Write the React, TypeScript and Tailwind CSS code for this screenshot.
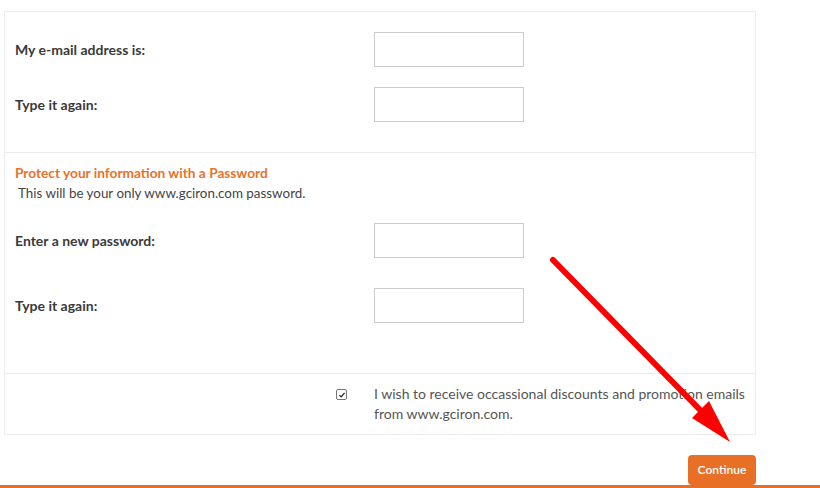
import React from "react";

const font = { fontFamily: "Lato, 'Open Sans', sans-serif" };

function Field({ label }: { label: string }) {
  return (
    <div className="flex items-center">
      <div className="w-[369px] pl-[10px] text-[14px] font-bold text-[#3a3a3a]">{label}</div>
      <input className="h-[35px] w-[150px] border border-[#cccccc] bg-white outline-none" />
    </div>
  );
}

export default function App() {
  return (
    <div className="relative h-[488px] w-[820px] overflow-hidden bg-white" style={font}>
      <div className="ml-[4px] mt-[11px] w-[752px] border border-[#ececec]">
        <div className="flex flex-col gap-[20px] border-b border-[#ececec] pb-[30px] pt-[20px]">
          <Field label="My e-mail address is:" />
          <Field label="Type it again:" />
        </div>
        <div className="border-b border-[#ececec] pb-[50px] pt-[10px]">
          <div className="pl-[10px] text-[13.7px] font-bold leading-[20px] text-[#e8722a]">
            Protect your information with a Password
          </div>
          <div className="pl-[10px] text-[13.4px] leading-[20px] text-[#444]">&nbsp;This will be your only www.gciron.com password.</div>
          <div className="mt-[20px] flex flex-col gap-[30px]">
            <Field label="Enter a new password:" />
            <Field label="Type it again:" />
          </div>
        </div>
        <div className="flex items-start py-[10px]">
          <div className="flex w-[369px] justify-end pr-[27px] pt-[5px]">
            <span className="flex h-[11px] w-[11px] items-center justify-center rounded-[2px] border border-[#777] bg-white">
              <svg viewBox="0 0 10 10" className="h-[8px] w-[8px]">
                <path d="M1.8 5.2 L4 7.4 L8.2 2.4" fill="none" stroke="#222" strokeWidth="1.6" />
              </svg>
            </span>
          </div>
          <div className="w-[378px] text-[14px] leading-[20px] text-[#555]">
            I wish to receive occassional discounts and promotion emails from www.gciron.com.
          </div>
        </div>
      </div>
      <div className="flex w-[756px] justify-end pt-[20px]">
        <button className="h-[30px] w-[68px] rounded-[4px] bg-[#e87026] text-[12px] font-semibold text-white">
          Continue
        </button>
      </div>
      <div className="absolute bottom-0 left-0 h-[3px] w-full bg-[#e87026]" />
      <svg className="pointer-events-none absolute left-0 top-0" width="820" height="488">
        <line x1="553" y1="260" x2="708" y2="418" stroke="#ff0000" strokeWidth="6" strokeLinecap="round" />
        <polygon points="730,442 692,418 709,401" fill="#ff0000" />
      </svg>
    </div>
  );
}
